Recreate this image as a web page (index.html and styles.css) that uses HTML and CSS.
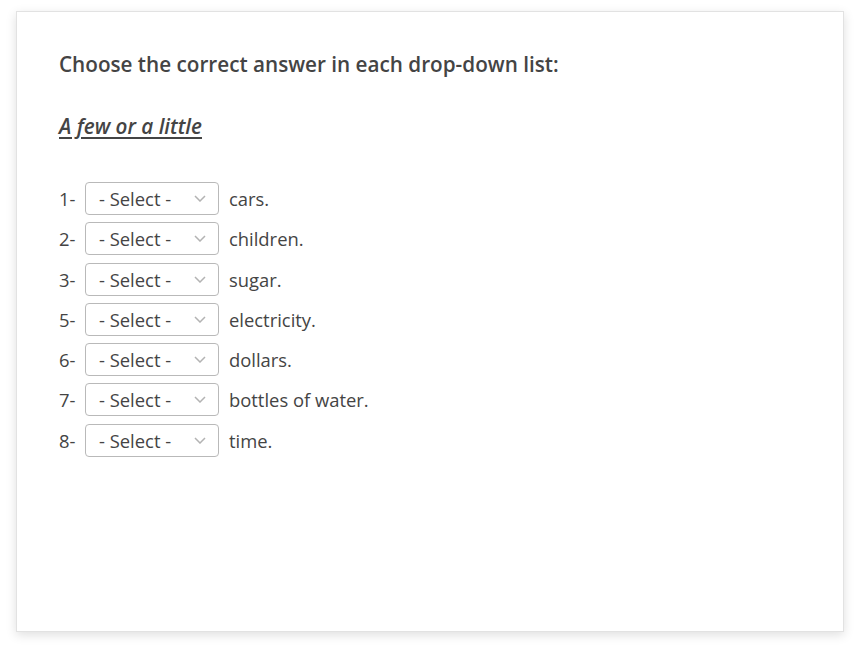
FILE: index.html
```html
<!DOCTYPE html>
<html>
<head>
<meta charset="utf-8">
<link rel="stylesheet" href="styles.css">
</head>
<body>
<div class="card">
  <h2 class="title">Choose the correct answer in each drop-down list:</h2>
  <h3 class="subtitle">A few or a little</h3>
  <div class="rows">
    <div class="row"><span class="num">1-</span><div class="sel"><span>- Select -</span><svg width="12" height="7" viewBox="0 0 12 7"><path d="M1 1 L6 6 L11 1" fill="none" stroke="#b3b3b3" stroke-width="1.5"/></svg></div><span class="txt">cars.</span></div>
    <div class="row"><span class="num">2-</span><div class="sel"><span>- Select -</span><svg width="12" height="7" viewBox="0 0 12 7"><path d="M1 1 L6 6 L11 1" fill="none" stroke="#b3b3b3" stroke-width="1.5"/></svg></div><span class="txt">children.</span></div>
    <div class="row"><span class="num">3-</span><div class="sel"><span>- Select -</span><svg width="12" height="7" viewBox="0 0 12 7"><path d="M1 1 L6 6 L11 1" fill="none" stroke="#b3b3b3" stroke-width="1.5"/></svg></div><span class="txt">sugar.</span></div>
    <div class="row"><span class="num">5-</span><div class="sel"><span>- Select -</span><svg width="12" height="7" viewBox="0 0 12 7"><path d="M1 1 L6 6 L11 1" fill="none" stroke="#b3b3b3" stroke-width="1.5"/></svg></div><span class="txt">electricity.</span></div>
    <div class="row"><span class="num">6-</span><div class="sel"><span>- Select -</span><svg width="12" height="7" viewBox="0 0 12 7"><path d="M1 1 L6 6 L11 1" fill="none" stroke="#b3b3b3" stroke-width="1.5"/></svg></div><span class="txt">dollars.</span></div>
    <div class="row"><span class="num">7-</span><div class="sel"><span>- Select -</span><svg width="12" height="7" viewBox="0 0 12 7"><path d="M1 1 L6 6 L11 1" fill="none" stroke="#b3b3b3" stroke-width="1.5"/></svg></div><span class="txt">bottles of water.</span></div>
    <div class="row"><span class="num">8-</span><div class="sel"><span>- Select -</span><svg width="12" height="7" viewBox="0 0 12 7"><path d="M1 1 L6 6 L11 1" fill="none" stroke="#b3b3b3" stroke-width="1.5"/></svg></div><span class="txt">time.</span></div>
  </div>
</div>
</body>
</html>
```
FILE: styles.css
```css
html, body {
  margin: 0;
  padding: 0;
  background: #ffffff;
}
body {
  padding: 11px 17px 22px 16px;
  font-family: "Open Sans", "Liberation Sans", sans-serif;
  color: #444444;
}
.card {
  box-sizing: border-box;
  width: 828px;
  height: 621px;
  border: 1px solid #e2e2e2;
  background: #fff;
  box-shadow: 0 3px 10px rgba(0, 0, 0, 0.13);
  padding: 38px 42px;
}
.title {
  margin: 0;
  font-size: 20.7px;
  font-weight: 600;
  line-height: 28px;
  color: #444;
}
.subtitle {
  margin: 34px 0 0;
  font-size: 20.7px;
  font-weight: 600;
  font-style: italic;
  text-decoration: underline;
  text-underline-offset: 3px;
  line-height: 28px;
  color: #444;
}
.rows {
  margin-top: 42px;
  display: flex;
  flex-direction: column;
  gap: 7.3px;
}
.row {
  display: flex;
  align-items: center;
  font-size: 18.4px;
  color: #444;
  height: 33px;
}
.num {
  width: 26px;
}
.sel {
  box-sizing: border-box;
  width: 134px;
  height: 33px;
  border: 1px solid #b9b9b9;
  border-radius: 4px;
  display: flex;
  align-items: center;
  justify-content: space-between;
  padding: 0 12px 0 13px;
  font-size: 18.4px;
  color: #444;
}
.txt {
  margin-left: 10px;
}
```
